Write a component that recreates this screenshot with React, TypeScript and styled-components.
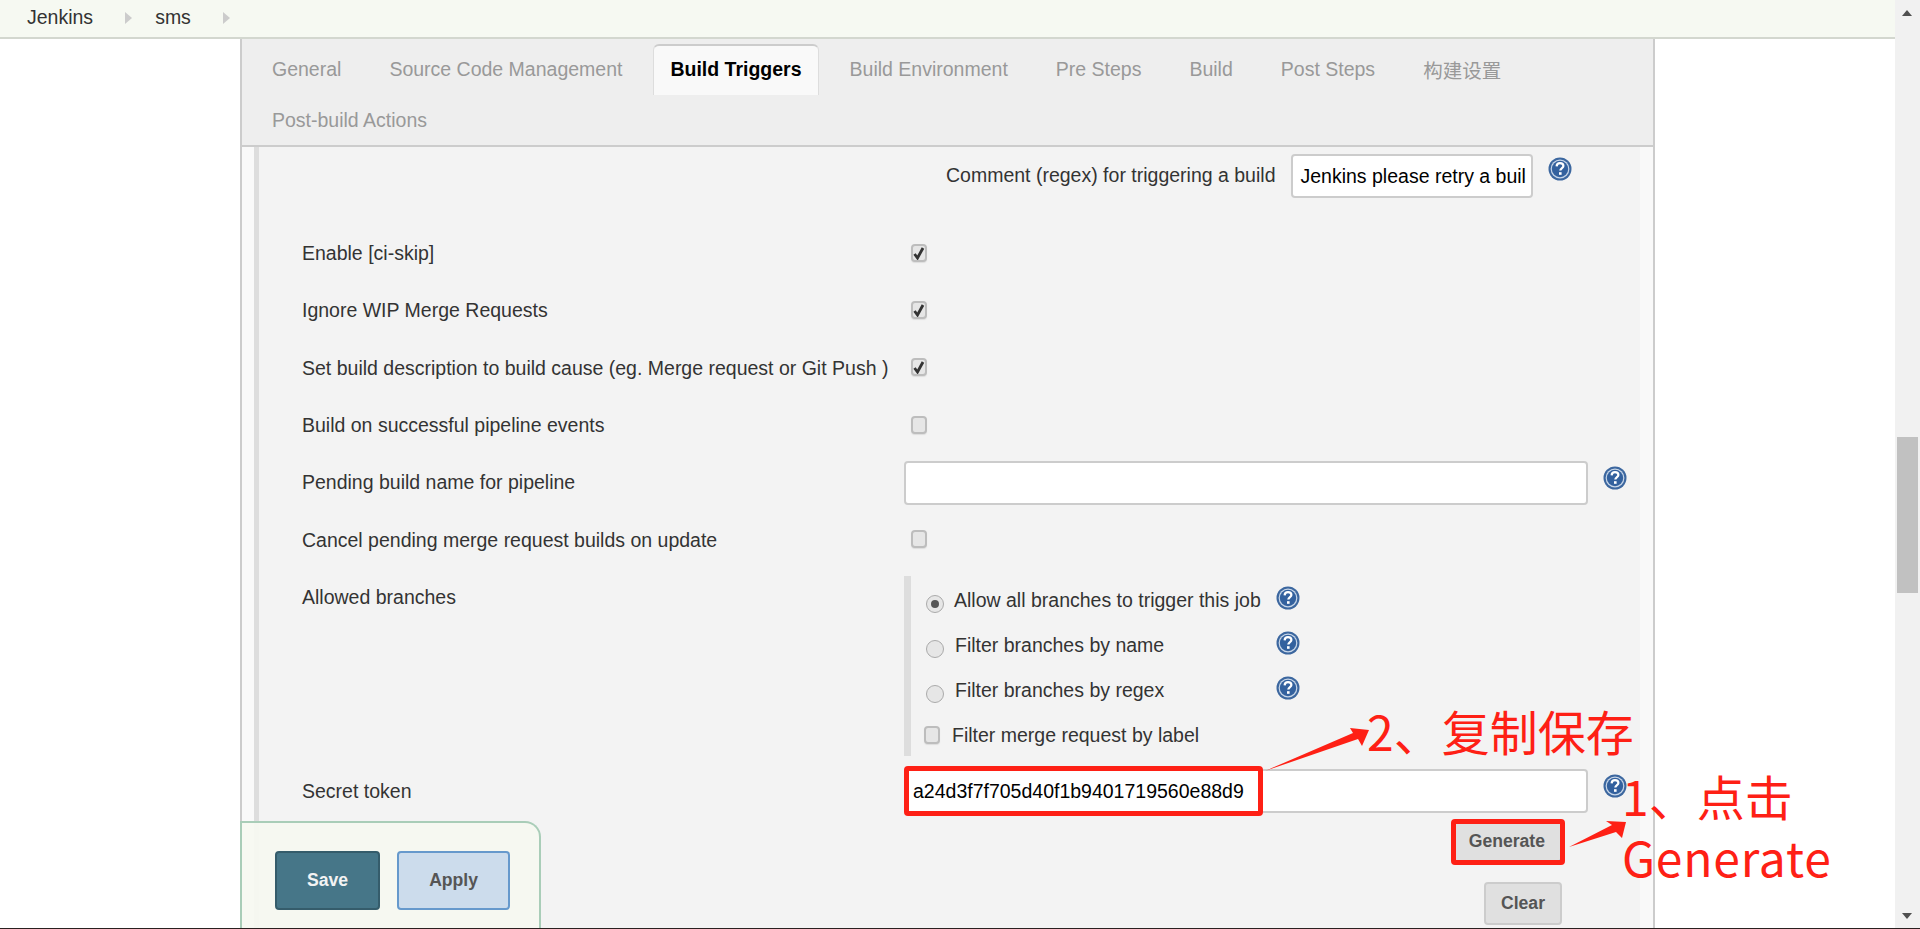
import React from 'react';
import styled, { createGlobalStyle } from 'styled-components';

const GlobalStyle = createGlobalStyle`
  html, body {
    margin: 0;
    padding: 0;
    height: 929px;
    overflow: hidden;
    background: #fff;
  }
  * {
    box-sizing: border-box;
  }
`;

const Page = styled.div`
  position: relative;
  display: flex;
  width: 1920px;
  height: 929px;
  overflow: hidden;
  border-bottom: 1px solid #2a2020;
  font-family: 'Liberation Sans', Arial, 'Noto Sans CJK SC', sans-serif;
  font-size: 19.5px;
  color: #333;
`;

const Main = styled.div`
  flex: 1;
  min-width: 0;
  display: flex;
  flex-direction: column;
`;

const Breadcrumbs = styled.div`
  flex: none;
  height: 39px;
  display: flex;
  align-items: center;
  padding: 0 0 2px 27px;
  background: #f6f9f2;
  border-bottom: 2px solid #d3d7cf;
`;

const Crumb = styled.span`
  color: #333;
`;

const CrumbArrow = styled.span`
  width: 0;
  height: 0;
  margin: 0 23px 0 32px;
  border-left: 7px solid #ccc;
  border-top: 6px solid transparent;
  border-bottom: 6px solid transparent;
`;

const Body = styled.div`
  flex: 1;
  min-height: 0;
  padding: 0 240px;
  overflow: hidden;
`;

const Panel = styled.div`
  position: relative;
  width: 1415px;
  height: 100%;
  display: flex;
  flex-direction: column;
  border-left: 2px solid #ccc;
  border-right: 2px solid #ccc;
  background: #f9f9f9;
`;

const Tabs = styled.div`
  flex: none;
  height: 108px;
  display: flex;
  flex-wrap: wrap;
  align-content: flex-start;
  column-gap: 14px;
  padding: 5px 0 0 13px;
  background: #eee;
  border-bottom: 2px solid #ccc;
`;

const Tab = styled.div<{ $active?: boolean }>`
  height: 51px;
  display: flex;
  align-items: center;
  padding: 0 16px 2px;
  border: 1px solid ${p => (p.$active ? '#ddd' : 'transparent')};
  border-top: 2px solid ${p => (p.$active ? '#ccc' : 'transparent')};
  border-bottom: 0;
  border-radius: 6px 6px 0 0;
  background: ${p => (p.$active ? '#f9f9f9' : 'transparent')};
  color: ${p => (p.$active ? '#000' : '#999')};
  font-weight: ${p => (p.$active ? 'bold' : 'normal')};
`;

const FormArea = styled.div`
  flex: 1;
  min-height: 0;
  margin: 0 13px 0 12px;
  padding-top: 7px;
  border-left: 5px solid #ddd;
  background: #f3f3f3;
  overflow: hidden;
`;

const CommentRow = styled.div`
  height: 71px;
  display: flex;
  align-items: flex-start;
  padding-left: 687px;
`;

const CommentLabel = styled.label`
  line-height: 42px;
  margin-right: 16px;
`;

const Row = styled.div<{ $tall?: boolean }>`
  display: grid;
  grid-template-columns: 602px 684px 40px;
  align-items: ${p => (p.$tall ? 'start' : 'center')};
  min-height: 57.3px;
  padding-left: 43px;
`;

const RowLabel = styled.label<{ $top?: number }>`
  padding-top: ${p => p.$top ?? 0}px;
`;

const TextField = styled.input<{ $compact?: boolean }>`
  width: ${p => (p.$compact ? '242px' : '100%')};
  height: 44px;
  padding: ${p => (p.$compact ? '0 5px 0 7px' : '0 7px')};
  border: 2px solid #ccc;
  border-radius: 4px;
  background: #fff;
  color: #000;
  font: 19.5px 'Liberation Sans', Arial, sans-serif;
  outline: none;
`;

const CheckboxBox = styled.span<{ $left?: number }>`
  width: 16px;
  height: 18px;
  margin: -2px 0 0 ${p => p.$left ?? 7}px;
  display: flex;
  align-items: center;
  justify-content: center;
  border: 2px solid #bdbdbd;
  border-radius: 4px;
  background: #e6e6e6;
  box-shadow: 0 1px 1px #ddd;
`;

const HelpWrap = styled.span<{ $shift?: number }>`
  display: block;
  flex: none;
  width: 24px;
  height: 24px;
  margin-left: 15px;
  transform: translateY(${p => p.$shift ?? 0}px);
`;

const BranchGroup = styled.div`
  height: 180px;
  margin: 7px 0 7px;
  padding: 10px 0 0 15px;
  border-left: 7px solid #ddd;
  display: flex;
  flex-direction: column;
`;

const BranchOption = styled.div`
  height: 45px;
  display: flex;
  align-items: flex-start;
`;

const RadioDot = styled.span<{ $on?: boolean }>`
  flex: none;
  width: 18px;
  height: 18px;
  margin: 9px 10px 0 0;
  display: flex;
  align-items: center;
  justify-content: center;
  border: 1px solid #aaa;
  border-radius: 50%;
  background: #e6e6e6;
  &::after {
    content: '';
    display: ${p => (p.$on ? 'block' : 'none')};
    width: 8px;
    height: 8px;
    border-radius: 50%;
    background: #555;
  }
`;

const OptionText = styled.span<{ $indent?: boolean }>`
  width: 307px;
  line-height: 24px;
  white-space: nowrap;
  padding: 2px 0 0 ${p => (p.$indent ? 1 : 0)}px;
`;

const MergeOption = styled.div`
  display: flex;
  align-items: center;
  height: 24px;
  margin: 3px 0 0 -2px;
  gap: 12px;
`;

const TokenActions = styled.div`
  display: flex;
  flex-direction: column;
  align-items: flex-end;
  gap: 19px;
  padding: 0 26px 0 0;
  margin: 0 0 0 645px;
  width: 684px;
`;

const SmallButton = styled.button<{ $focused?: boolean }>`
  height: 43px;
  padding: 0 15px;
  border: 2px solid ${p => (p.$focused ? '#6699cc' : '#ccc')};
  border-radius: 4px;
  background: #e0e0e0;
  color: #555;
  font: bold 17.6px 'Liberation Sans', Arial, sans-serif;
`;

const SaveBar = styled.div`
  position: absolute;
  left: -2px;
  bottom: 0;
  width: 301px;
  height: 107px;
  display: flex;
  align-items: flex-start;
  gap: 17px;
  padding: 28px 0 0 33px;
  border: 2px solid #a9cdb8;
  border-bottom: 0;
  border-radius: 0 16px 0 0;
  background: rgba(246, 249, 241, 0.92);
`;

const BarButton = styled.button<{ $primary?: boolean }>`
  height: 59px;
  padding: 0 30px;
  border: 2px solid ${p => (p.$primary ? '#355c6b' : '#6699cc')};
  border-radius: 4px;
  background: ${p => (p.$primary ? '#467688' : '#ccdcec')};
  color: ${p => (p.$primary ? '#f3f3f3' : '#555')};
  font: bold 17.6px 'Liberation Sans', Arial, sans-serif;
  min-width: ${p => (p.$primary ? '105px' : '113px')};
`;

const Scrollbar = styled.div`
  flex: none;
  width: 25px;
  position: relative;
  background: #f1f1f1;
`;

const ScrollArrow = styled.span<{ $down?: boolean }>`
  position: absolute;
  left: 7px;
  ${p => (p.$down ? 'bottom: 9px;' : 'top: 10px;')}
  width: 0;
  height: 0;
  border-left: 5.5px solid transparent;
  border-right: 5.5px solid transparent;
  ${p => (p.$down ? 'border-top: 6px solid #505050;' : 'border-bottom: 6px solid #505050;')}
`;

const ScrollThumb = styled.div`
  position: absolute;
  left: 2px;
  top: 437px;
  width: 21px;
  height: 156px;
  background: #c1c1c1;
`;

const RedFrame = styled.div<{ $x: number; $y: number; $w: number; $h: number }>`
  position: absolute;
  left: ${p => p.$x}px;
  top: ${p => p.$y}px;
  width: ${p => p.$w}px;
  height: ${p => p.$h}px;
  border: 5px solid #fe2015;
  border-radius: 4px;
  pointer-events: none;
`;

const Note = styled.div<{ $x: number; $y: number; $wide?: boolean }>`
  position: absolute;
  left: ${p => p.$x}px;
  top: ${p => p.$y}px;
  color: #fe2015;
  font-family: 'Noto Sans CJK SC', 'Noto Sans', sans-serif;
  font-size: 48px;
  line-height: 50px;
  letter-spacing: ${p => (p.$wide ? '0.8px' : '0')};
  white-space: nowrap;
  pointer-events: none;
`;

const ArrowLayer = styled.svg`
  position: absolute;
  left: 0;
  top: 0;
  width: 1920px;
  height: 929px;
  pointer-events: none;
`;

const Tick = () => (
  <svg width="12" height="14" viewBox="0 0 12 14">
    <path d="M1.5 8 L4.5 12 L10 2" fill="none" stroke="#333" strokeWidth="2.8" />
  </svg>
);

const Checkbox = ({ checked, left }: { checked?: boolean; left?: number }) => (
  <CheckboxBox $left={left}>{checked && <Tick />}</CheckboxBox>
);

const HelpIcon = ({ shift }: { shift?: number }) => (
  <HelpWrap $shift={shift}>
    <svg width="24" height="24" viewBox="0 0 24 24">
      <circle cx="12" cy="12" r="11.5" fill="#3c679f" />
      <circle cx="12" cy="12" r="9.4" fill="#c9d7e9" />
      <circle cx="12" cy="12" r="8.2" fill="#33619e" />
      <path
        d="M8.6 9.4 C8.8 7 10.4 6.2 12 6.2 C14 6.2 15.4 7.4 15.4 9 C15.4 11 12.3 11.2 12.3 13.6"
        fill="none"
        stroke="#fff"
        strokeWidth="2.2"
      />
      <rect x="11" y="15.2" width="2.6" height="2.6" fill="#fff" />
    </svg>
  </HelpWrap>
);

const tabs = [
  'General',
  'Source Code Management',
  'Build Triggers',
  'Build Environment',
  'Pre Steps',
  'Build',
  'Post Steps',
  '构建设置',
  'Post-build Actions',
];

const checkRows = [
  { label: 'Enable [ci-skip]', checked: true },
  { label: 'Ignore WIP Merge Requests', checked: true },
  { label: 'Set build description to build cause (eg. Merge request or Git Push )', checked: true },
  { label: 'Build on successful pipeline events', checked: false },
];

const branchOptions = [
  { label: 'Allow all branches to trigger this job', on: true },
  { label: 'Filter branches by name', on: false },
  { label: 'Filter branches by regex', on: false },
];

export default function App() {
  return (
    <Page>
      <GlobalStyle />
      <Main>
        <Breadcrumbs>
          <Crumb>Jenkins</Crumb>
          <CrumbArrow />
          <Crumb>sms</Crumb>
          <CrumbArrow />
        </Breadcrumbs>
        <Body>
          <Panel>
            <Tabs>
              {tabs.map(t => (
                <Tab key={t} $active={t === 'Build Triggers'}>
                  {t}
                </Tab>
              ))}
            </Tabs>
            <FormArea>
              <CommentRow>
                <CommentLabel>Comment (regex) for triggering a build</CommentLabel>
                <TextField $compact readOnly value="Jenkins please retry a build" />
                <HelpIcon shift={3} />
              </CommentRow>

              {checkRows.map(r => (
                <Row key={r.label}>
                  <RowLabel>{r.label}</RowLabel>
                  <Checkbox checked={r.checked} />
                </Row>
              ))}

              <Row>
                <RowLabel>Pending build name for pipeline</RowLabel>
                <TextField readOnly value="" />
                <HelpIcon shift={-5} />
              </Row>

              <Row>
                <RowLabel>Cancel pending merge request builds on update</RowLabel>
                <Checkbox />
              </Row>

              <Row $tall>
                <RowLabel $top={17}>Allowed branches</RowLabel>
                <BranchGroup>
                  {branchOptions.map(o => (
                    <BranchOption key={o.label}>
                      <RadioDot $on={o.on} />
                      <OptionText $indent={!o.on}>{o.label}</OptionText>
                      <HelpIcon />
                    </BranchOption>
                  ))}
                  <MergeOption>
                    <Checkbox left={0} />
                    <span>Filter merge request by label</span>
                  </MergeOption>
                </BranchGroup>
              </Row>

              <Row>
                <RowLabel>Secret token</RowLabel>
                <TextField readOnly value="a24d3f7f705d40f1b9401719560e88d9" />
                <HelpIcon shift={-5} />
              </Row>

              <TokenActions>
                <SmallButton $focused>Generate</SmallButton>
                <SmallButton>Clear</SmallButton>
              </TokenActions>
            </FormArea>
            <SaveBar>
              <BarButton $primary>Save</BarButton>
              <BarButton>Apply</BarButton>
            </SaveBar>
          </Panel>
        </Body>
      </Main>
      <Scrollbar>
        <ScrollArrow />
        <ScrollThumb />
        <ScrollArrow $down />
      </Scrollbar>

      <RedFrame $x={904} $y={766} $w={359} $h={50} />
      <RedFrame $x={1451} $y={819} $w={114} $h={46} />
      <ArrowLayer viewBox="0 0 1920 929">
        <path d="M1265 771 L1353 733 L1350 728 L1369 730 L1362 746 L1358 739 Z" fill="#fe2015" />
        <path d="M1569 847 L1612 825 L1606 821 L1626 822 L1622 838 L1616 832 Z" fill="#fe2015" />
      </ArrowLayer>
      <Note $x={1367} $y={705}>2、复制保存</Note>
      <Note $x={1622} $y={770}>1、点击</Note>
      <Note $x={1622} $y={831} $wide>Generate</Note>
    </Page>
  );
}
